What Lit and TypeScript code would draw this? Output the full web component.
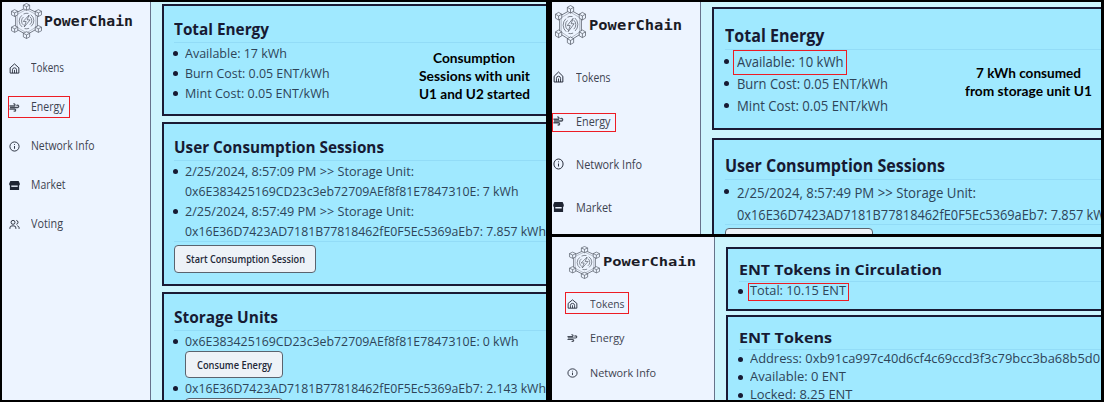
import { LitElement, html, svg, css, nothing } from "lit";
import { customElement, property } from "lit/decorators.js";
import { styleMap } from "lit/directives/style-map.js";

/** Text condensed or widened horizontally to fill an exact width. */
@customElement("fit-text")
class FitText extends LitElement {
  @property() text = "";
  @property({ type: Number }) w = 0;
  static styles = css`
    :host { display: inline-block; white-space: nowrap; flex: none; }
    .t { display: inline-block; transform-origin: 0 50%; }
  `;
  updated() {
    const t = this.renderRoot.querySelector(".t") as HTMLElement;
    this.style.width = this.w + "px";
    const fit = () => {
      t.style.transform = "none";
      const n = t.getBoundingClientRect().width;
      if (n) t.style.transform = `scaleX(${this.w / n})`;
    };
    fit();
    document.fonts.ready.then(fit);
  }
  render() {
    return html`<span class="t">${this.text}</span>`;
  }
}

const fit = (text: string, w: number) => html`<fit-text .text=${text} .w=${w}></fit-text>`;

const icons: Record<string, unknown> = {
  home: svg`<path d="M2.500 10.500 12 2l9.500 8.500V22h-19z"/><path stroke-width="1.800" d="M7.500 22v-7a4.500 4.500 0 0 1 9 0v7M12 15v7"/>`,
  wind: svg`<path stroke="#474d59" stroke-width="2.800" d="M1 8.500h12M1 15.500h8M2 12h16.500a2.600 2.600 0 1 0-2.200-4M9 15.500h3.200a2.300 2.300 0 1 1-2 3.600M9.500 4.500a2.200 2.200 0 1 1 2.500 3.800"/>`,
  info: svg`<circle cx="12" cy="12" r="10"/><path d="M12 11v6M12 6.800v1.800"/>`,
  market: svg`<path fill="currentColor" stroke="none" d="M3 2h18l2.500 5.500v2.500a2 2 0 0 1-1.500 1.800V22H2V11.800A2 2 0 0 1 .5 10V7.500z"/><path stroke="#edf4ff" stroke-width="3" d="M5 13.500h14"/>`,
  users: svg`<path d="M2 21.500v-2a4.500 4.500 0 0 1 4.500-4.500h4a4.500 4.500 0 0 1 4.500 4.500v2M18 14.800c2.500.6 4 2.400 4 4.700v2M16 3a4.300 4.300 0 0 1 0 8.500"/><circle cx="8.800" cy="7.300" r="4.300"/>`,
};

const cube = (x: number, y: number) => svg`<g transform="translate(${x} ${y})">
  <path fill="#edf4ff" d="M0-10.500 9.500-5.500V5.500L0 10.500-9.500 5.500V-5.500z"/><path d="M-9.500-5.500 0-.5 9.500-5.500M0-.5V10.500"/></g>`;

const logo = svg`
  <path d="M50 14 83 31V79L50 98 17 79V31z" stroke-width="2.200"/>
  <path d="M50 20 78 35V75L50 92 22 75V35z" stroke-width="1"/>
  ${cube(50, 12)}${cube(86, 31)}${cube(86, 80)}${cube(50, 99)}${cube(14, 80)}${cube(14, 31)}
  <g stroke-width="2"><path d="M37 74a23 23 0 0 1-1-36M42 69a16 16 0 0 1-1-26M63 36a23 23 0 0 1 1 36M60 42a16 16 0 0 1 0 25M41 34a23 23 0 0 1 15-2M44 79a23 23 0 0 0 14-1"/>
  <path d="M58 37 40 57h9l-6 17 18-22H52z"/></g>`;

type Nav = [icon: string, label: string, width: number];
type Line = { t?: string; w?: number; cont?: boolean; btn?: [string, number, number]; rule?: boolean; foot?: boolean };
type Card = { title: string; w: number; lines: Line[] };
type Shot = { cls: string; brand: number; nav: Nav[]; cards: Card[] };

const S1 = "2/25/2024, 8:57:09 PM >> Storage Unit:";
const S2 = "2/25/2024, 8:57:49 PM >> Storage Unit:";
const U1 = "0x6E383425169CD23c3eb72709AEf8f81E7847310E: ";
const U2 = "0x16E36D7423AD7181B77818462fE0F5Ec5369aEb7: ";

const shots: Record<string, Shot> = {
  a: {
    cls: "a", brand: 89,
    nav: [["home", "Tokens", 33], ["wind", "Energy", 33.5], ["info", "Network Info", 63.5], ["market", "Market", 34.5], ["users", "Voting", 32]],
    cards: [
      { title: "Total Energy", w: 95, lines: [
        { t: "Available: 17 kWh", w: 102 }, { t: "Burn Cost: 0.05 ENT/kWh", w: 144.5 }, { t: "Mint Cost: 0.05 ENT/kWh", w: 144.5 }] },
      { title: "User Consumption Sessions", w: 210, lines: [
        { t: S1, w: 229 }, { t: U1 + "7 kWh", w: 333.5, cont: true },
        { t: S2, w: 229 }, { t: U2 + "7.857 kWh", w: 361, cont: true },
        { rule: true }, { btn: ["Start Consumption Session", 119, 142], foot: true }] },
      { title: "Storage Units", w: 104, lines: [
        { t: U1 + "0 kWh", w: 333.5 }, { btn: ["Consume Energy", 75, 98] },
        { t: U2 + "2.143 kWh", w: 361 }, { btn: ["Consume Energy", 75, 98] }] },
    ],
  },
  b: {
    cls: "b", brand: 93,
    nav: [["home", "Tokens", 34.5], ["wind", "Energy", 34.5], ["info", "Network Info", 66], ["market", "Market", 36]],
    cards: [
      { title: "Total Energy", w: 99.5, lines: [
        { t: "Available: 10 kWh", w: 106.5 }, { t: "Burn Cost: 0.05 ENT/kWh", w: 151 }, { t: "Mint Cost: 0.05 ENT/kWh", w: 151 }] },
      { title: "User Consumption Sessions", w: 220, lines: [
        { t: S2, w: 239 }, { t: U2 + "7.857 kWh", w: 376, cont: true },
        { rule: true }, { btn: ["Start Consumption Session", 124, 148], foot: true }] },
    ],
  },
  c: {
    cls: "c", brand: 93,
    nav: [["home", "Tokens", 34.5], ["wind", "Energy", 34.5], ["info", "Network Info", 66]],
    cards: [
      { title: "ENT Tokens in Circulation", w: 203, lines: [{ t: "Total: 10.15 ENT", w: 96 }] },
      { title: "ENT Tokens", w: 93, lines: [
        { t: "Address: 0xb91ca997c40d6cf4c69ccd3f3c79bcc3ba68b5d0", w: 350 },
        { t: "Available: 0 ENT", w: 96 }, { t: "Locked: 8.25 ENT", w: 102.5 }] },
    ],
  },
};

@customElement("power-chain")
class PowerChain extends LitElement {
  @property({ attribute: false }) shot!: Shot;
  static styles = css`
    :host { display: block; overflow: hidden; min-width: 0; min-height: 0; }
    .app { display: flex; height: 100%; background: #cdf5fd; font-family: "Open Sans", "Noto Sans", sans-serif; }
    .side { flex: none; box-sizing: border-box; width: var(--side); border-right: 1px solid #66738a; background: #edf4ff; color: #3d4350; }
    .brand { display: flex; align-items: center; height: var(--brand-h); padding: var(--brand-top) 0 0 var(--brand-x); }
    .logo { width: 33px; height: var(--logo-h); flex: none; fill: none; stroke: #4a505c; stroke-width: 2; margin-right: var(--logo-gap, 2px); }
    .name { display: block; color: #1b1b26; font: bold var(--name-size)/20px "DejaVu Sans Mono", monospace; }
    .nav { padding-top: var(--nav-top); }
    .item { display: flex; align-items: center; height: var(--nav-h); padding-left: var(--nav-x); font-size: var(--nav-size); line-height: 16px; }
    .ico { width: 11px; height: var(--ico-h, 11px); flex: none; margin-right: var(--nav-gap, 11px); fill: none; stroke: currentColor; stroke-width: 2; color: #1f2533; }
    .main { flex: 1; min-width: 0; display: flex; flex-direction: column; gap: var(--gap); padding: var(--top) 0 0 11px; overflow: hidden; }
    .card { flex: none; width: 500px; box-sizing: border-box; border: 2px solid #1a1b35; background: #a0e9ff; padding: var(--pad) 10px var(--pad) var(--pad-x); color: #2e4458; }
    .title { display: flex; align-items: center; height: var(--title-h); margin: 0; font-size: var(--title-size); font-weight: 700; line-height: 1; color: #171a33; border-bottom: 1px solid #92dcf7; }
    .line { display: flex; align-items: center; box-sizing: border-box; height: var(--row); padding-top: var(--drop, 0); font-size: var(--size); line-height: 1; }
    .dot { flex: none; width: 5px; height: 5px; border-radius: 50%; background: #171a33; margin: 0 var(--dot-gap, 7px) 0 -1px; }
    .off { visibility: hidden; }
    .rule { height: 1px; background: #92dcf7; }
    .btn { display: flex; align-items: center; justify-content: center; box-sizing: border-box; height: var(--btn-h); margin: 0 0 0 11px; border: 1px solid #5a636e; border-radius: 4px; background: #edf2f7; font-size: 11.5px; line-height: 1; font-weight: 600; color: #222838; }
    .foot { margin: 3px 0 0; height: 28px; }
    .a { --side: 149px; --brand-h: 34px; --brand-top: 2px; --brand-x: 7.5px; --logo-h: 36px; --logo-gap: 1px; --name-size: 14px; --nav-top: 10.5px; --nav-h: 39px; --nav-x: 7px; --nav-size: 12px;
      --top: 2px; --gap: 6px; --pad: 11px; --pad-x: 10px; --title-h: 25px; --title-size: 16.8px; --row: 20px; --size: 13.4px; --btn-h: 27px; --drop: 1.5px; }
    .b { --side: 149px; --brand-h: 38px; --brand-top: 4px; --brand-x: 2px; --logo-h: 40px; --name-size: 14.8px; --nav-top: 11.5px; --nav-h: 43.4px; --nav-x: 1px; --nav-gap: 12px; --nav-size: 12.8px; --ico-h: 12px;
      --top: 5px; --gap: 7.5px; --pad: 12px; --pad-x: 11px; --title-h: 27.5px; --title-size: 18px; --row: 22.2px; --size: 14.6px; --btn-h: 30px; --drop: 1.5px; --dot-gap: 7.5px; }
    .c { --side: 163px; --brand-h: 32px; --brand-top: 9px; --brand-x: 16px; --logo-h: 33px; --name-size: 12.8px; --nav-top: 8.7px; --nav-h: 34.5px; --nav-x: 15px; --nav-gap: 11.5px; --nav-size: 11.5px; --ico-h: 10px;
      --top: 10px; --gap: 4.5px; --pad: 9px; --pad-x: 11px; --title-h: 23px; --title-size: 15px; --row: 17.8px; --size: 12.2px; --btn-h: 25px; --drop: .5px; }
  `;
  line(l: Line) {
    if (l.rule) return html`<div class="rule"></div>`;
    if (l.btn)
      return html`<div class="btn ${l.foot ? "foot" : ""}" style=${styleMap({ width: l.btn[2] + "px" })}>${fit(l.btn[0], l.btn[1])}</div>`;
    return html`<div class="line"><i class="dot ${l.cont ? "off" : ""}"></i>${fit(l.t!, l.w!)}</div>`;
  }
  render() {
    const s = this.shot;
    return html`<div class="app ${s.cls}">
      <nav class="side">
        <div class="brand">
          <svg class="logo" viewBox="0 0 100 111" preserveAspectRatio="none">${logo}</svg>
          <span class="name">${fit("PowerChain", s.brand)}</span>
        </div>
        <div class="nav">
          ${s.nav.map(([i, t, w]) => html`<div class="item">
            <svg class="ico" viewBox="0 0 24 24" preserveAspectRatio="none">${icons[i] ?? nothing}</svg>${fit(t, w)}</div>`)}
        </div>
      </nav>
      <main class="main">
        ${s.cards.map((c) => html`<section class="card"><h2 class="title">${fit(c.title, c.w)}</h2>${c.lines.map((l) => this.line(l))}</section>`)}
      </main>
    </div>`;
  }
}

@customElement("app-root")
class AppRoot extends LitElement {
  static styles = css`
    :host { display: block; }
    .board { position: relative; box-sizing: border-box; width: 1104px; height: 402px; padding: 2px 3px 2px 2px; background: #000; display: grid; grid-template-columns: 544px 549px; column-gap: 6px; overflow: hidden; }
    .right { display: grid; grid-template-rows: 232px 163px; row-gap: 3px; min-height: 0; }
    .left { height: 398px; }
    .mark { position: absolute; box-sizing: border-box; border: 1px solid #ed1c24; }
    .note { position: absolute; display: flex; flex-direction: column; align-items: center; font: 700 14px/18px Lato, sans-serif; color: #000; }
    .n1 { left: 418px; top: 49px; width: 112px; }
    .n2 { left: 964px; top: 64px; width: 128px; }
    .m1 { left: 8px; top: 96px; width: 62px; height: 22px; }
    .m2 { left: 552px; top: 113px; width: 64px; height: 19px; }
    .m3 { left: 733px; top: 50px; width: 114px; height: 25px; }
    .m4 { left: 565px; top: 292px; width: 64px; height: 22px; }
    .m5 { left: 748px; top: 283px; width: 101px; height: 18px; }
  `;
  render() {
    return html`<div class="board">
      <power-chain class="left" .shot=${shots.a}></power-chain>
      <div class="right">
        <power-chain .shot=${shots.b}></power-chain>
        <power-chain .shot=${shots.c}></power-chain>
      </div>
      ${[1, 2, 3, 4, 5].map((n) => html`<div class="mark m${n}"></div>`)}
      <div class="note n1">${fit("Consumption", 82)}${fit("Sessions with unit", 111)}${fit("U1 and U2 started", 111)}</div>
      <div class="note n2">${fit("7 kWh consumed", 105)}${fit("from storage unit U1", 127)}</div>
    </div>`;
  }
}
